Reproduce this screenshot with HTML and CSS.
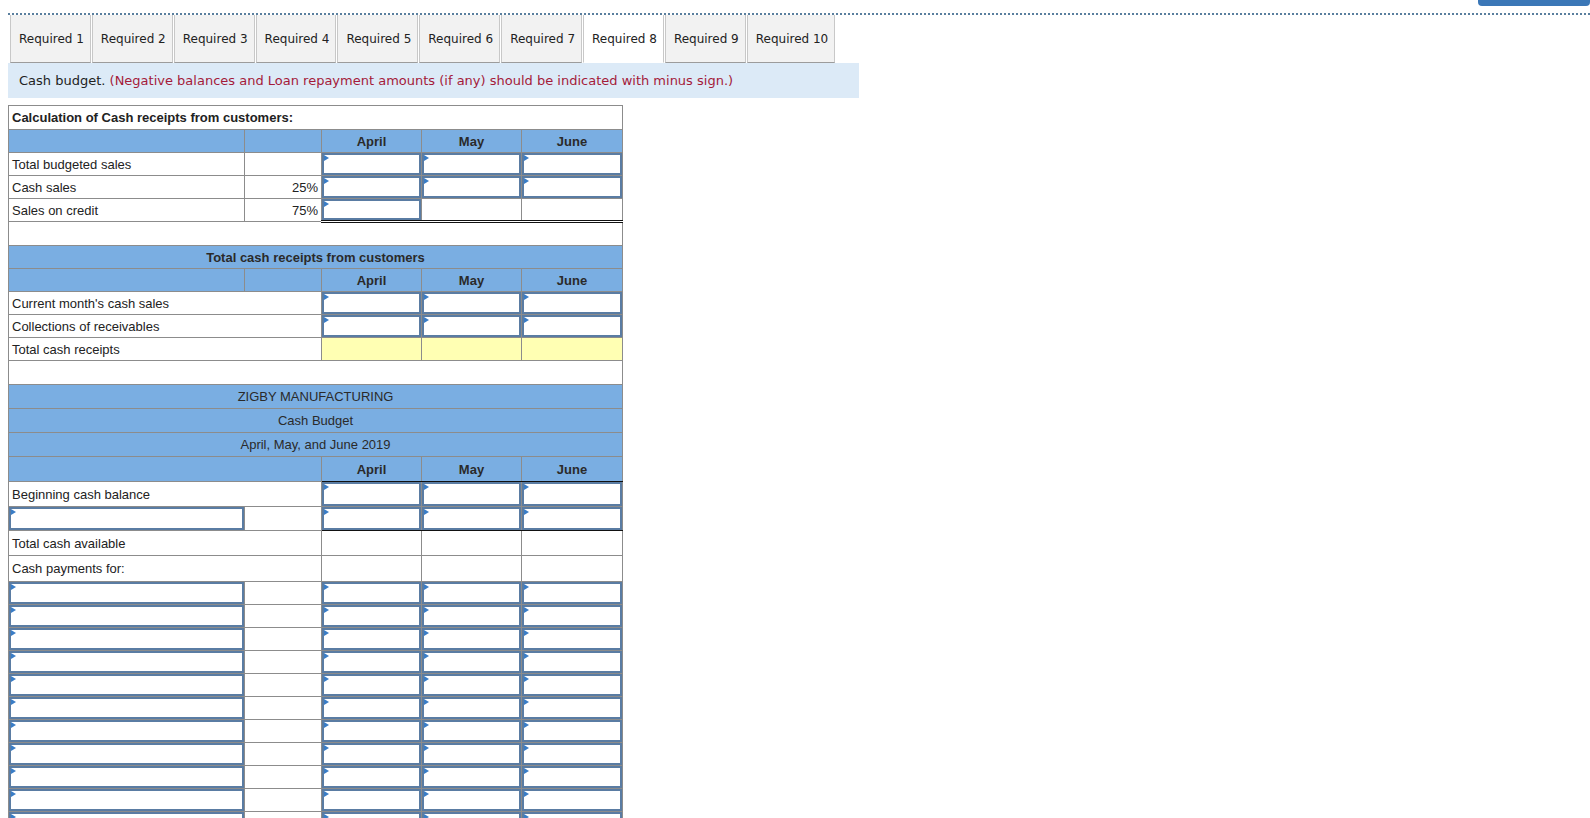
FILE: index.html
```html
<!DOCTYPE html>
<html>
<head>
<meta charset="utf-8">
<title>Cash budget</title>
<link rel="stylesheet" href="styles.css">
</head>
<body>
<div class="page">
  <div class="topbar"><div class="topbtn"></div></div>
  <div class="tabs">
    <div class="tab">Required 1</div>
    <div class="tab">Required 2</div>
    <div class="tab">Required 3</div>
    <div class="tab">Required 4</div>
    <div class="tab">Required 5</div>
    <div class="tab">Required 6</div>
    <div class="tab">Required 7</div>
    <div class="tab active">Required 8</div>
    <div class="tab">Required 9</div>
    <div class="tab">Required 10</div>
  </div>
  <div class="note"><span class="note-lead">Cash budget.</span>&nbsp;<span class="note-red">(Negative balances and Loan repayment amounts (if any) should be indicated with minus sign.)</span></div>

  <table class="sheet">
    <colgroup>
      <col class="c-label"><col class="c-pct"><col class="c-mon"><col class="c-mon"><col class="c-mon">
    </colgroup>
    <tr class="r24"><td colspan="5" class="title">Calculation of Cash receipts from customers:</td></tr>
    <tr class="r23 blue"><td></td><td></td><td>April</td><td>May</td><td>June</td></tr>
    <tr class="r23"><td>Total budgeted sales</td><td></td><td class="in"><div class="box"></div></td><td class="in"><div class="box"></div></td><td class="in"><div class="box"></div></td></tr>
    <tr class="r23"><td>Cash sales</td><td class="pct">25%</td><td class="in"><div class="box"></div></td><td class="in"><div class="box"></div></td><td class="in"><div class="box"></div></td></tr>
    <tr class="r22"><td>Sales on credit</td><td class="pct">75%</td><td class="in dbl"><div class="box"></div></td><td class="dbl"></td><td class="dbl"></td></tr>
    <tr class="r23"><td colspan="5" class="empty"></td></tr>
    <tr class="r23 blue"><td colspan="5">Total cash receipts from customers</td></tr>
    <tr class="r23 blue"><td></td><td></td><td>April</td><td>May</td><td>June</td></tr>
    <tr class="r23"><td colspan="2">Current month's cash sales</td><td class="in"><div class="box"></div></td><td class="in"><div class="box"></div></td><td class="in"><div class="box"></div></td></tr>
    <tr class="r23"><td colspan="2">Collections of receivables</td><td class="in"><div class="box"></div></td><td class="in"><div class="box"></div></td><td class="in"><div class="box"></div></td></tr>
    <tr class="r23"><td colspan="2">Total cash receipts</td><td class="yel"></td><td class="yel"></td><td class="yel"></td></tr>
    <tr class="r24"><td colspan="5" class="empty"></td></tr>
    <tr class="r24 blue plain"><td colspan="5">ZIGBY MANUFACTURING</td></tr>
    <tr class="r24 blue plain"><td colspan="5">Cash Budget</td></tr>
    <tr class="r24 blue plain"><td colspan="5">April, May, and June 2019</td></tr>
    <tr class="r25 blue"><td colspan="2"></td><td class="blk">April</td><td class="blk">May</td><td class="blk">June</td></tr>
    <tr class="r25"><td colspan="2">Beginning cash balance</td><td class="in"><div class="box"></div></td><td class="in"><div class="box"></div></td><td class="in"><div class="box"></div></td></tr>
    <tr class="r24"><td class="in"><div class="box"></div></td><td></td><td class="in blk"><div class="box"></div></td><td class="in blk"><div class="box"></div></td><td class="in blk"><div class="box"></div></td></tr>
    <tr class="r25"><td colspan="2">Total cash available</td><td></td><td></td><td></td></tr>
    <tr class="r26"><td colspan="2">Cash payments for:</td><td></td><td></td><td></td></tr>
    <tr class="r23"><td class="in"><div class="box"></div></td><td></td><td class="in"><div class="box"></div></td><td class="in"><div class="box"></div></td><td class="in"><div class="box"></div></td></tr>
    <tr class="r23"><td class="in"><div class="box"></div></td><td></td><td class="in"><div class="box"></div></td><td class="in"><div class="box"></div></td><td class="in"><div class="box"></div></td></tr>
    <tr class="r23"><td class="in"><div class="box"></div></td><td></td><td class="in"><div class="box"></div></td><td class="in"><div class="box"></div></td><td class="in"><div class="box"></div></td></tr>
    <tr class="r23"><td class="in"><div class="box"></div></td><td></td><td class="in"><div class="box"></div></td><td class="in"><div class="box"></div></td><td class="in"><div class="box"></div></td></tr>
    <tr class="r23"><td class="in"><div class="box"></div></td><td></td><td class="in"><div class="box"></div></td><td class="in"><div class="box"></div></td><td class="in"><div class="box"></div></td></tr>
    <tr class="r23"><td class="in"><div class="box"></div></td><td></td><td class="in"><div class="box"></div></td><td class="in"><div class="box"></div></td><td class="in"><div class="box"></div></td></tr>
    <tr class="r23"><td class="in"><div class="box"></div></td><td></td><td class="in"><div class="box"></div></td><td class="in"><div class="box"></div></td><td class="in"><div class="box"></div></td></tr>
    <tr class="r23"><td class="in"><div class="box"></div></td><td></td><td class="in"><div class="box"></div></td><td class="in"><div class="box"></div></td><td class="in"><div class="box"></div></td></tr>
    <tr class="r23"><td class="in"><div class="box"></div></td><td></td><td class="in"><div class="box"></div></td><td class="in"><div class="box"></div></td><td class="in"><div class="box"></div></td></tr>
    <tr class="r23"><td class="in"><div class="box"></div></td><td></td><td class="in"><div class="box"></div></td><td class="in"><div class="box"></div></td><td class="in"><div class="box"></div></td></tr>
    <tr class="r23"><td class="in"><div class="box"></div></td><td></td><td class="in"><div class="box"></div></td><td class="in"><div class="box"></div></td><td class="in"><div class="box"></div></td></tr>
    <tr class="r23"><td class="in"><div class="box"></div></td><td></td><td class="in"><div class="box"></div></td><td class="in"><div class="box"></div></td><td class="in"><div class="box"></div></td></tr>
  </table>
</div>
</body>
</html>
```

FILE: styles.css
```css
html, body {
  margin: 0;
  padding: 0;
  overflow: hidden;
  background: #ffffff;
}

.page {
  width: 1582px;
  margin-left: 8px;
}

.topbar {
  height: 13px;
  display: flex;
  justify-content: flex-end;
}

.topbtn {
  width: 112px;
  height: 6px;
  background: #3b77b7;
  border-radius: 0 0 4px 4px;
}

.tabs {
  display: flex;
  border-top: 2px dotted #5a7f9e;
  height: 48px;
  padding-left: 2px;
}

.tab {
  display: flex;
  align-items: center;
  padding: 0 6px 0 8px;
  margin-right: 1px;
  background: #f2f2f2;
  border-left: 1px solid #c8c8c8;
  border-right: 1px solid #c8c8c8;
  border-bottom: 1px solid #9c9c9c;
  font: 12px "DejaVu Sans", Verdana, sans-serif;
  color: #222;
}

.tab.active {
  background: #ffffff;
  border-bottom-color: #ffffff;
}

.note {
  width: 840px;
  height: 35px;
  padding-left: 11px;
  display: flex;
  align-items: center;
  background: #dceaf7;
  font: 13px "DejaVu Sans", Verdana, sans-serif;
  color: #222;
  white-space: nowrap;
}

.note-red {
  color: #a41b3a;
}

.sheet {
  margin-top: 7px;
  border-collapse: collapse;
  table-layout: fixed;
  width: 614px;
  font: 13px "Liberation Sans", Arial, sans-serif;
  color: #222;
}

.c-label { width: 236px; }
.c-pct { width: 77px; }
.c-mon { width: 100px; }
.c-mon:last-child { width: 101px; }

.sheet td {
  border: 1px solid #8c8c8c;
  padding: 0 3px;
  white-space: nowrap;
  overflow: hidden;
}

.r22 td { height: 21px; }
.r23 td { height: 22px; }
.r24 td { height: 23px; }
.r25 td { height: 24px; }
.r26 td { height: 25px; }

.sheet td.title {
  font-weight: bold;
  color: #222;
}

.blue td {
  background: #7aaee2;
  font-weight: bold;
  text-align: center;
  color: #2a2a2a;
}

.blue.plain td {
  font-weight: normal;
}

.sheet td.pct {
  text-align: right;
}

.sheet td.in {
  padding: 0;
}

.box {
  position: relative;
  height: 22px;
  border: 2px solid #5a7ca3;
  box-sizing: border-box;
  background: #ffffff;
}

.r22 .box { height: 21px; }
.r24 .box { height: 23px; }
.r25 .box { height: 24px; }

.box::before {
  content: "";
  position: absolute;
  left: 0;
  top: 0;
  width: 0;
  height: 0;
  border-left: 5px solid #3a7dc6;
  border-top: 3px solid transparent;
  border-bottom: 3px solid transparent;
}

.sheet td.yel {
  background: #ffffb3;
}

.sheet td.dbl {
  border-bottom: 3px double #111;
}

.sheet td.blk {
  border-bottom: 1px solid #111;
}
```
